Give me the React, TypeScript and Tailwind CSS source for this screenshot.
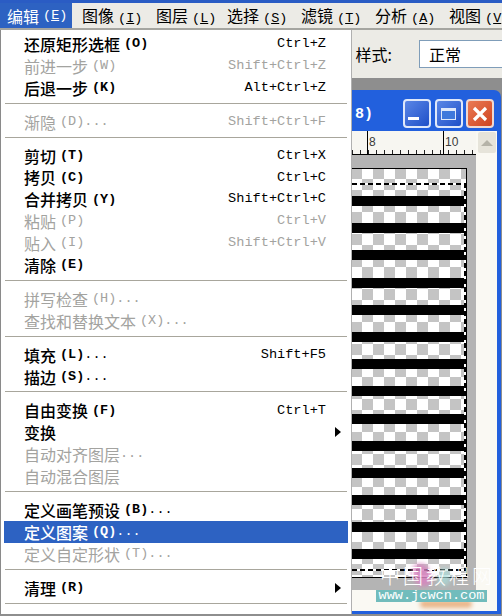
const MONO = "font-['Liberation_Mono','Noto_Sans_CJK_SC',monospace]";

type Item = { zh?: string; pre?: string; key?: string; dots?: boolean; sc?: string; off?: boolean; sel?: boolean; sub?: boolean; sep?: boolean };

const menuItems: Item[] = [
  { zh: '还原矩形选框', key: '(O)', sc: 'Ctrl+Z' },
  { zh: '前进一步', key: '(W)', sc: 'Shift+Ctrl+Z', off: true },
  { zh: '后退一步', key: '(K)', sc: 'Alt+Ctrl+Z' },
  { sep: true },
  { zh: '渐隐', key: '(D)', dots: true, sc: 'Shift+Ctrl+F', off: true },
  { sep: true },
  { zh: '剪切', key: '(T)', sc: 'Ctrl+X' },
  { zh: '拷贝', key: '(C)', sc: 'Ctrl+C' },
  { zh: '合并拷贝', key: '(Y)', sc: 'Shift+Ctrl+C' },
  { zh: '粘贴', key: '(P)', sc: 'Ctrl+V', off: true },
  { zh: '贴入', key: '(I)', sc: 'Shift+Ctrl+V', off: true },
  { zh: '清除', key: '(E)' },
  { sep: true },
  { zh: '拼写检查', key: '(H)', dots: true, off: true },
  { zh: '查找和替换文本', key: '(X)', dots: true, off: true },
  { sep: true },
  { zh: '填充', key: '(L)', dots: true, sc: 'Shift+F5' },
  { zh: '描边', key: '(S)', dots: true },
  { sep: true },
  { zh: '自由变换', key: '(F)', sc: 'Ctrl+T' },
  { zh: '变换', sub: true },
  { zh: '自动对齐图层', dots: true, off: true },
  { zh: '自动混合图层', off: true },
  { sep: true },
  { zh: '定义画笔预设', key: '(B)', dots: true },
  { zh: '定义图案', key: '(Q)', dots: true, sel: true },
  { zh: '定义自定形状', key: '(T)', dots: true, off: true },
  { sep: true },
  { zh: '清理', key: '(R)', sub: true },
  { sep: true },
  { pre: 'Adobe PDF ', zh: '预设', dots: true },
];

const topMenus = [
  { zh: '图像', key: 'I', w: 'w-[74px]' },
  { zh: '图层', key: 'L', w: 'w-[71px]' },
  { zh: '选择', key: 'S', w: 'w-[74px]' },
  { zh: '滤镜', key: 'T', w: 'w-[74px]' },
  { zh: '分析', key: 'A', w: 'w-[74px]' },
  { zh: '视图', key: 'V', w: 'w-[74px]' },
];

const stripes = Array.from({ length: 14 }, (_, i) => i);

function MenuRow({ item }: { item: Item }) {
  if (item.sep) {
    return (
      <div className="h-[12px] shrink-0 pt-[4px] pl-[4px] pr-[4px]">
        <div className="h-[1px] bg-[#a8a69c]" />
      </div>
    );
  }
  const color = item.sel ? 'text-white bg-[#2d62c2]' : item.off ? 'text-[#a3a3a0]' : 'text-black';
  return (
    <div className={`${item.pre ? 'h-[21px]' : 'h-[21.9px]'} shrink-0 flex items-center ml-[3px] mr-[3px] pl-[20px] pr-[22px] ${color}`}>
      {item.pre && <span className={`${MONO} text-[13.5px] leading-none whitespace-pre`}>{item.pre}</span>}
      <span className={`text-[16px] leading-none ${item.off ? '' : 'font-medium'}`}>{item.zh}</span>
      {item.key && <span className={`${MONO} ml-[4px] text-[13.5px] leading-none ${item.off ? '' : 'font-bold'}`}>{item.key}</span>}
      {item.dots && <span className={`${MONO} text-[13.5px] leading-none`}>...</span>}
      <span className="flex-1" />
      {item.sc && <span className={`${MONO} text-[13.6px] leading-none`}>{item.sc}</span>}
      {item.sub && <span className="w-0 h-0 -mr-[15px] border-y-[5px] border-y-transparent border-l-[6px] border-l-black" />}
    </div>
  );
}

function Ruler() {
  return (
    <div className="h-[24px] shrink-0 bg-[#f7f6f1] flex items-end relative overflow-hidden">
      <div className="w-full h-[5px] border-b border-b-black bg-[repeating-linear-gradient(90deg,#222_0,#222_1px,transparent_1px,transparent_8px)]" />
      <span className="absolute left-[63px] top-0 w-[1px] h-[23px] bg-black" />
      <span className="absolute left-[139px] top-0 w-[1px] h-[23px] bg-black" />
      <span className="absolute left-[65px] top-[5px] text-[12px] leading-none font-['Liberation_Sans',sans-serif] text-[#3a3a3a]">8</span>
      <span className="absolute left-[141px] top-[5px] text-[12px] leading-none font-['Liberation_Sans',sans-serif] text-[#3a3a3a]">10</span>
    </div>
  );
}

function Canvas() {
  return (
    <div className="relative h-[410px] w-[163px] overflow-hidden border-t border-r border-b border-black bg-white bg-[conic-gradient(#c4c4c4_25%,#ffffff_0_50%,#c4c4c4_0_75%,#ffffff_0)] bg-[length:22px_22px] bg-[position:-8px_-1px]">
      <div className="flex flex-col gap-[17.2px] pt-[27px]">
        {stripes.map(i => (
          <div key={i} className="h-[10px] bg-black blur-[0.6px]" />
        ))}
      </div>
      <div className="absolute left-0 right-0 top-[14px] h-[2px] bg-[repeating-linear-gradient(90deg,#000_0,#000_5px,#fff_5px,#fff_8px)]" />
      <div className="absolute left-0 right-0 top-[400px] h-[2px] bg-[repeating-linear-gradient(90deg,#000_0,#000_5px,#fff_5px,#fff_8px)]" />
      <div className="absolute right-0 top-[14px] h-[388px] w-[2px] bg-[repeating-linear-gradient(180deg,#000_0,#000_5px,#fff_5px,#fff_8px)]" />
    </div>
  );
}

function Watermark() {
  return (
    <div className="absolute left-[376px] top-[560px] w-[126px] h-[50px] pointer-events-none">
      <div className="absolute left-[37px] top-[3px] w-[18px] h-[24px] rounded-full rotate-[-30deg] bg-[#d884c0]/85 blur-[2px]" />
      <div className="absolute left-[62px] top-[8px] w-[12px] h-[18px] rounded-full bg-[#a8dcd8]/70 blur-[2px]" />
      <div className="absolute left-[44px] top-[40px] w-[52px] h-[8px] rounded-full bg-[#eab68a] blur-[2px]" />
      <div className="absolute left-[4px] top-[2px] h-[27px] text-[20px] leading-[27px] tracking-[3px] font-light text-white whitespace-nowrap">中国教程网</div>
      <div className={`${MONO} absolute left-0 top-[30px] w-[111px] h-[12px] bg-[#71bcbc] text-white text-[13.6px] leading-[12px] text-center whitespace-nowrap`}>www.jcwcn.com</div>
    </div>
  );
}

export default function App() {
  return (
    <div className="relative w-[502px] h-[616px] overflow-hidden bg-[#8e8e8e] font-['Noto_Sans_CJK_SC',sans-serif]">
      <div className="h-[3px] bg-[#2a5cc4]" />

      {/* menu bar */}
      <div className="h-[27px] flex items-center bg-[#ecebe6] border-b-2 border-b-[#a5a5a0] text-black text-[16px]">
        <div className="w-[72px] h-full shrink-0 flex items-center pl-[7px] pt-[1px] bg-[#2d62c2] text-white">
          编辑<span className={`${MONO} ml-[4px] text-[13.5px]`}>(<u>E</u>)</span>
        </div>
        <div className="flex pl-[10px] pt-[1px]">
          {topMenus.map(m => (
            <div key={m.zh} className={`${m.w} shrink-0 whitespace-nowrap`}>
              {m.zh}<span className={`${MONO} ml-[4px] text-[13.5px]`}>(<u>{m.key}</u>)</span>
            </div>
          ))}
        </div>
      </div>

      {/* options bar */}
      <div className="h-[48px] flex items-center justify-end bg-[#ecebe6]">
        <span className="text-[16px] text-black mr-[27px]">样式:</span>
        <div className="w-[83px] h-[28px] flex items-center pl-[9px] bg-white border border-r-0 border-[#7f9db9] text-[16px] text-black">正常</div>
      </div>

      {/* document window */}
      <div className="ml-[300px] mt-[12px] w-[201px] h-[524px] rounded-t-[7px] bg-[#2260dd] px-[4px] pb-[3px] flex flex-col">
        <div className="h-[41px] shrink-0 flex items-end justify-between pb-[3px] pr-[3px]">
          <span className={`${MONO} ml-[51px] mb-[6px] text-[15px] leading-none font-bold text-white`}>8)</span>
          <div className="flex gap-[3.5px]">
            <div className="w-[28px] h-[29px] rounded-[4px] border-2 border-[#dfe8fa] bg-[linear-gradient(135deg,#5a86e6,#1f50c8)] flex items-end pl-[3px] pb-[6px]">
              <div className="w-[11px] h-[3px] bg-white" />
            </div>
            <div className="w-[28px] h-[29px] rounded-[4px] border-2 border-[#dfe8fa] bg-[linear-gradient(135deg,#5a86e6,#1f50c8)] flex items-center justify-center">
              <div className="w-[15px] h-[12px] border border-t-[3px] border-[#dfe8fa] bg-[#3f78dc]" />
            </div>
            <div className="w-[28px] h-[29px] rounded-[4px] border-2 border-[#f0d8d0] bg-[linear-gradient(135deg,#ea7b55,#cf4320)] flex items-center justify-center">
              <svg width="18" height="18" viewBox="0 0 18 18"><path d="M3 3 L15 15 M15 3 L3 15" stroke="#fff" strokeWidth="3.2" /></svg>
            </div>
          </div>
        </div>
        <div className="flex-1 min-h-0 flex bg-[#faf9f3]">
          <div className="w-[172px] shrink-0 flex flex-col">
            <Ruler />
            <div className="h-[435px] shrink-0 bg-[#b4b4b4] pt-[13px]">
              <Canvas />
            </div>
          </div>
          <div className="flex-1 pt-[1px] pl-[2px]">
            <div className="w-[18px] h-[21px] rounded-[2px] bg-[#e6e4da] flex items-center justify-center">
              <div className="w-0 h-0 border-x-[6px] border-x-transparent border-b-[6px] border-b-[#b5b3a8]" />
            </div>
          </div>
        </div>
      </div>

      <Watermark />

      {/* edit menu */}
      <div className="absolute left-0 top-[30px] w-[352px] h-[584px] overflow-hidden bg-white border-l border-l-[#8a8a8a] border-r border-r-[#b0b0b0] flex flex-col pt-[3px]">
        {menuItems.map((item, i) => (
          <MenuRow key={i} item={item} />
        ))}
      </div>
    </div>
  );
}
